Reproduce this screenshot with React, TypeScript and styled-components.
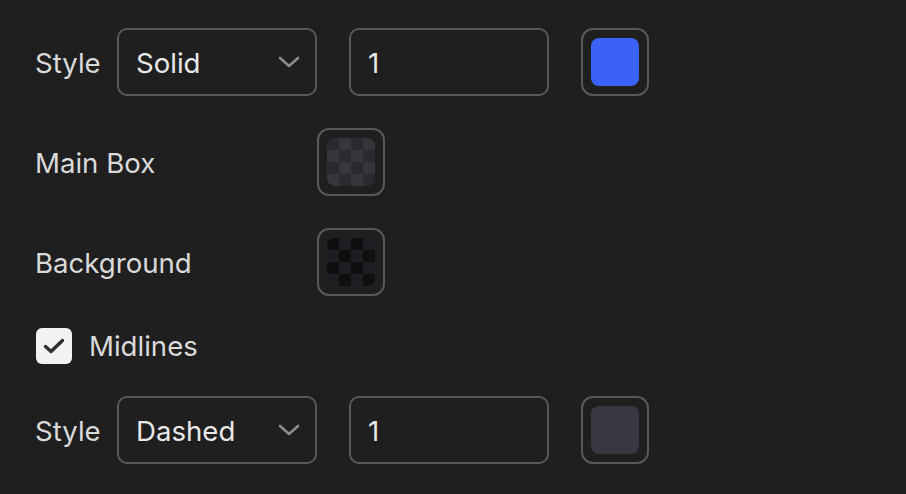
import React from 'react';
import styled, { createGlobalStyle } from 'styled-components';

const GlobalStyle = createGlobalStyle`
	html, body {
		margin: 0;
		padding: 0;
		background: #1f1f1f;
	}
	body {
		font-family: Inter, "Noto Sans", "Liberation Sans", sans-serif;
		color: #dcdcdc;
	}
`;

const Panel = styled.div`
	display: flex;
	flex-direction: column;
	gap: 32px;
	padding: 28px 0 0 35px;
	width: 906px;
	height: 494px;
	box-sizing: border-box;
`;

const Row = styled.div`
	display: flex;
	align-items: center;
	height: 68px;
`;

const CheckRow = styled.div`
	display: flex;
	align-items: center;
	gap: 17px;
	height: 36px;
	margin-left: 1px;
`;

const Label = styled.span<{ width?: number; lift?: boolean }>`
	font-size: 27.6px;
	padding-top: ${(p) => (p.lift ? 0 : 2)}px;
	color: #dadada;
	width: ${(p) => (p.width ? `${p.width}px` : 'auto')};
	flex-shrink: 0;
`;

const Field = styled.div<{ width: number }>`
	display: flex;
	align-items: center;
	justify-content: space-between;
	box-sizing: border-box;
	width: ${(p) => p.width}px;
	height: 68px;
	padding: 2px 15px 0 17px;
	border: 2px solid #595959;
	border-radius: 10px;
	font-size: 27.6px;
	color: #e8e8e8;
`;

const Swatch = styled.div`
	box-sizing: border-box;
	width: 68px;
	height: 68px;
	padding: 8px;
	border: 2px solid #595959;
	border-radius: 12px;
`;

const Fill = styled.div<{ color: string }>`
	width: 100%;
	height: 100%;
	border-radius: 8px;
	background: ${(p) => p.color};
`;

const Checker = styled.div<{ light: string; dark: string }>`
	width: 100%;
	height: 100%;
	border-radius: 8px;
	background-color: ${(p) => p.dark};
	background-image: conic-gradient(
		${(p) => p.light} 0 25%,
		${(p) => p.dark} 0 50%,
		${(p) => p.light} 0 75%,
		${(p) => p.dark} 0
	);
	background-size: 24px 24px;
`;

const Box = styled.div`
	display: grid;
	place-items: center;
	width: 36px;
	height: 36px;
	border-radius: 6px;
	background: #f2f2f2;
`;

const Spacer = styled.div`
	width: 32px;
	flex-shrink: 0;
`;

const Chevron = () => (
	<svg width="22" height="14" viewBox="0 0 22 14" fill="none" style={{ marginTop: -2 }}>
		<path d="M2 3l9 8 9-8" stroke="#8c8c8c" strokeWidth="2.6" strokeLinecap="round" strokeLinejoin="round" />
	</svg>
);

const Select = ({ value }: { value: string }) => (
	<Field width={200}>
		<span>{value}</span>
		<Chevron />
	</Field>
);

const LineRow = ({ style, width, color }: { style: string; width: string; color: string }) => (
	<Row>
		<Label width={82}>Style</Label>
		<Select value={style} />
		<Spacer />
		<Field width={200}>
			<span>{width}</span>
		</Field>
		<Spacer />
		<Swatch>
			<Fill color={color} />
		</Swatch>
	</Row>
);

export default function App() {
	return (
		<>
			<GlobalStyle />
			<Panel>
				<LineRow style="Solid" width="1" color="#3b62f6" />
				<Row>
					<Label width={282}>Main Box</Label>
					<Swatch>
						<Checker light="#35363c" dark="#2a2b30" />
					</Swatch>
				</Row>
				<Row>
					<Label width={282}>Background</Label>
					<Swatch>
						<Checker light="#1d1e22" dark="#0e0f11" />
					</Swatch>
				</Row>
				<CheckRow>
					<Box>
						<svg width="22" height="16" viewBox="0 0 22 16" fill="none">
							<path d="M2.5 8.5l5.5 5L19.5 2.5" stroke="#2e2e2e" strokeWidth="3.4" strokeLinecap="round" strokeLinejoin="round" />
						</svg>
					</Box>
					<Label lift>Midlines</Label>
				</CheckRow>
				<LineRow style="Dashed" width="1" color="#373842" />
			</Panel>
		</>
	);
}
